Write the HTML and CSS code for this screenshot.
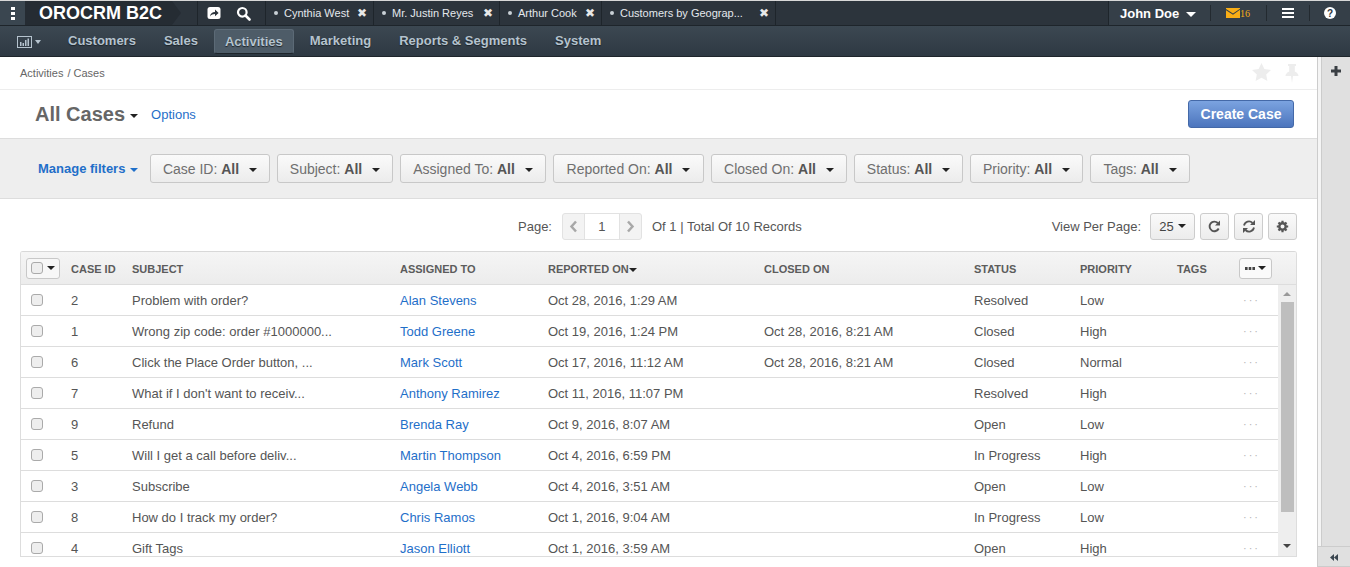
FILE: index.html
```html
<!DOCTYPE html>
<html lang="en">
<head>
  <meta charset="UTF-8" />
  <title>All Cases - Activities - OroCRM</title>
  <link rel="stylesheet" href="styles.css">
</head>
<body>
  <header class="topbar">
    <div class="dots"><i></i><i></i><i></i></div>
    <div class="logo">OROCRM B2C</div>
    <div class="quick">
      <svg width="14" height="14" viewBox="0 0 14 14"><rect x="0.5" y="1" width="13" height="12" rx="2.5" fill="#fff"/><path d="M3 10.5c.3-3 2.2-4.6 5-4.6V3.6l3.6 3.3L8 10.2V8C6 8 4.300 8.700 3 10.500z" fill="#2c343c"/></svg>
      <svg width="15" height="15" viewBox="0 0 15 15"><circle cx="6.300" cy="6.300" r="4.300" fill="none" stroke="#fff" stroke-width="2.200"/><path d="M9.500 9.500l4 4" stroke="#fff" stroke-width="2.600" stroke-linecap="round"/></svg>
    </div>
    <div class="tab tab-a"><span class="tab-title">Cynthia West</span><span class="tab-x">✖</span></div>
    <div class="tab tab-b"><span class="tab-title">Mr. Justin Reyes</span><span class="tab-x">✖</span></div>
    <div class="tab tab-c"><span class="tab-title">Arthur Cook</span><span class="tab-x">✖</span></div>
    <div class="tab tab-d"><span class="tab-title">Customers by Geograp...</span><span class="tab-x">✖</span></div>
    <div class="user-area">
      <div class="user">John Doe <b class="caret caret-white"></b></div>
      <div class="mail">
        <svg width="14" height="10" viewBox="0 0 14 10"><path d="M0 0h14v.8L7 5.500 0 1z M0 2.200l7 4.500 7-5V10H0z" fill="#f9ae16"/></svg>
        <span>16</span>
      </div>
      <div class="burger"><i></i><i></i><i></i></div>
      <div class="help">?</div>
    </div>
  </header>

  <nav class="mainnav">
    <div class="nav-chart">
      <svg width="15" height="12" viewBox="0 0 15 12"><rect x="0.500" y="0.500" width="14" height="11" fill="none" stroke="#b5c3ce"/><path d="M3 6h1.500v4H3zM5.500 7H7v3H5.500zM8 4h1.500v6H8zM10.500 2.500H12V10h-1.500z" fill="#b5c3ce"/></svg>
      <b class="caret caret-nav"></b>
    </div>
    <a href="#">Customers</a>
    <a href="#">Sales</a>
    <a href="#" class="active">Activities</a>
    <a href="#">Marketing</a>
    <a href="#">Reports &amp; Segments</a>
    <a href="#">System</a>
  </nav>

  <div class="layout">
    <main class="content">
      <div class="crumbs">
        <span>Activities<span class="crumb-sep">/</span>Cases</span>
        <div class="crumb-icons">
          <svg width="19" height="18" viewBox="0 0 19 18"><path d="M9.500 0l2.900 6 6.600.9-4.800 4.600 1.200 6.500-5.900-3.200L3.600 18l1.200-6.500L0 6.900 6.600 6z" fill="#ededed"/></svg>
          <svg class="crumb-pin" width="14" height="19" viewBox="0 0 14 19"><path d="M3 0h8v2H9.800v5.500C12 8.500 13.500 10 13.500 12H8l-1 7-1-7H.5c0-2 1.500-3.500 3.700-4.500V2H3z" fill="#ededed"/></svg>
        </div>
      </div>

      <div class="title-row">
        <h1>All Cases</h1>
        <b class="caret caret-dark"></b>
        <a href="#" class="options">Options</a>
        <button class="create">Create Case</button>
      </div>

      <div class="filters">
        <a href="#" class="manage">Manage filters <b class="caret caret-blue"></b></a>
        <button class="filter f-id">Case ID: <strong>All</strong><b class="caret caret-dark"></b></button>
        <button class="filter f-subject">Subject: <strong>All</strong><b class="caret caret-dark"></b></button>
        <button class="filter f-assigned">Assigned To: <strong>All</strong><b class="caret caret-dark"></b></button>
        <button class="filter f-reported">Reported On: <strong>All</strong><b class="caret caret-dark"></b></button>
        <button class="filter f-closed">Closed On: <strong>All</strong><b class="caret caret-dark"></b></button>
        <button class="filter f-status">Status: <strong>All</strong><b class="caret caret-dark"></b></button>
        <button class="filter f-priority">Priority: <strong>All</strong><b class="caret caret-dark"></b></button>
        <button class="filter f-tags">Tags: <strong>All</strong><b class="caret caret-dark"></b></button>
      </div>

      <div class="pager-row">
        <div class="pager">
          <span>Page:</span>
          <div class="pager-box">
            <span class="pg-arrow"><svg width="9" height="13" viewBox="0 0 9 13"><path d="M7 1.500L2.500 6.500 7 11.500" fill="none" stroke="#a8a8a8" stroke-width="2.500"/></svg></span>
            <span class="pg-num">1</span>
            <span class="pg-arrow"><svg width="9" height="13" viewBox="0 0 9 13"><path d="M2 1.500l4.500 5-4.500 5" fill="none" stroke="#a8a8a8" stroke-width="2.500"/></svg></span>
          </div>
          <span>Of 1 | Total Of 10 Records</span>
        </div>
        <div class="view-tools">
          <span class="per-label">View Per Page:</span>
          <button class="tool tool-size">25 <b class="caret caret-dark"></b></button>
          <button class="tool">
            <svg width="13" height="13" viewBox="0 0 13 13"><path d="M10.700 8.500A4.800 4.800 0 1 1 9.800 3" fill="none" stroke="#555" stroke-width="1.900"/><path d="M12 .5v5H7z" fill="#555"/></svg>
          </button>
          <button class="tool">
            <svg width="14" height="13" viewBox="0 0 14 13"><path d="M2 5.500A5 5 0 0 1 10.500 3M12 7.500A5 5 0 0 1 3.500 10" fill="none" stroke="#555" stroke-width="1.800"/><path d="M13 0v5H8zM1 13V8h5z" fill="#555"/></svg>
          </button>
          <button class="tool">
            <svg width="13" height="13" viewBox="0 0 13 13"><circle cx="6.500" cy="6.500" r="3.200" fill="none" stroke="#555" stroke-width="2.400"/><path d="M6.500 .8v2M6.500 10.200v2M.8 6.500h2M10.200 6.500h2M2.500 2.500l1.400 1.400M9.100 9.100l1.400 1.400M2.500 10.500l1.400-1.400M9.100 3.900l1.400-1.400" stroke="#555" stroke-width="2.200"/></svg>
          </button>
        </div>
      </div>

      <section class="grid">
        <div class="grid-head">
          <div class="col-check"><span class="select-all"><i class="check"></i><b class="caret caret-dark"></b></span></div>
          <div>CASE ID</div>
          <div>SUBJECT</div>
          <div>ASSIGNED TO</div>
          <div>REPORTED ON<b class="caret caret-dark caret-sort"></b></div>
          <div>CLOSED ON</div>
          <div>STATUS</div>
          <div>PRIORITY</div>
          <div>TAGS</div>
          <div><span class="col-menu"><svg width="10" height="3" viewBox="0 0 10 3"><path d="M0 0h2.600v3H0zM3.700 0h2.600v3H3.700zM7.400 0H10v3H7.400z" fill="#444"/></svg><b class="caret caret-dark"></b></span></div>
        </div>
        <div class="grid-body">
          <div class="rows">
            <div class="row"><div class="col-check"><i class="check"></i></div><div>2</div><div>Problem with order?</div><div><a href="#">Alan Stevens</a></div><div>Oct 28, 2016, 1:29 AM</div><div></div><div>Resolved</div><div>Low</div><div></div><div class="more">···</div></div>
            <div class="row"><div class="col-check"><i class="check"></i></div><div>1</div><div>Wrong zip code: order #1000000...</div><div><a href="#">Todd Greene</a></div><div>Oct 19, 2016, 1:24 PM</div><div>Oct 28, 2016, 8:21 AM</div><div>Closed</div><div>High</div><div></div><div class="more">···</div></div>
            <div class="row"><div class="col-check"><i class="check"></i></div><div>6</div><div>Click the Place Order button, ...</div><div><a href="#">Mark Scott</a></div><div>Oct 17, 2016, 11:12 AM</div><div>Oct 28, 2016, 8:21 AM</div><div>Closed</div><div>Normal</div><div></div><div class="more">···</div></div>
            <div class="row"><div class="col-check"><i class="check"></i></div><div>7</div><div>What if I don't want to receiv...</div><div><a href="#">Anthony Ramirez</a></div><div>Oct 11, 2016, 11:07 PM</div><div></div><div>Resolved</div><div>High</div><div></div><div class="more">···</div></div>
            <div class="row"><div class="col-check"><i class="check"></i></div><div>9</div><div>Refund</div><div><a href="#">Brenda Ray</a></div><div>Oct 9, 2016, 8:07 AM</div><div></div><div>Open</div><div>Low</div><div></div><div class="more">···</div></div>
            <div class="row"><div class="col-check"><i class="check"></i></div><div>5</div><div>Will I get a call before deliv...</div><div><a href="#">Martin Thompson</a></div><div>Oct 4, 2016, 6:59 PM</div><div></div><div>In Progress</div><div>High</div><div></div><div class="more">···</div></div>
            <div class="row"><div class="col-check"><i class="check"></i></div><div>3</div><div>Subscribe</div><div><a href="#">Angela Webb</a></div><div>Oct 4, 2016, 3:51 AM</div><div></div><div>Open</div><div>Low</div><div></div><div class="more">···</div></div>
            <div class="row"><div class="col-check"><i class="check"></i></div><div>8</div><div>How do I track my order?</div><div><a href="#">Chris Ramos</a></div><div>Oct 1, 2016, 9:04 AM</div><div></div><div>In Progress</div><div>Low</div><div></div><div class="more">···</div></div>
            <div class="row"><div class="col-check"><i class="check"></i></div><div>4</div><div>Gift Tags</div><div><a href="#">Jason Elliott</a></div><div>Oct 1, 2016, 3:59 AM</div><div></div><div>Open</div><div>High</div><div></div><div class="more">···</div></div>
          </div>
          <div class="scrollbar">
            <b class="sb-up"></b>
            <div class="sb-thumb"></div>
            <b class="sb-down"></b>
          </div>
        </div>
      </section>
    </main>

    <aside class="side">
      <div class="side-main">
        <svg width="10" height="10" viewBox="0 0 10 10"><path d="M3.500 0h3v3.500H10v3H6.500V10h-3V6.500H0v-3h3.500z" fill="#3a3f44"/></svg>
      </div>
      <div class="side-foot">
        <svg width="8" height="7" viewBox="0 0 8 7"><path d="M4 0v7L0 3.500zM8 0v7L4 3.500z" fill="#3a4650"/></svg>
      </div>
    </aside>
  </div>
</body>
</html>
```

FILE: styles.css
```css
* {
  box-sizing: border-box;
}
html, body {
  height: 100%;
}
body {
  margin: 0;
  height: 567px;
  overflow: hidden;
  display: flex;
  flex-direction: column;
  font-family: "Liberation Sans", Arial, sans-serif;
  font-size: 13px;
  color: #444;
  background: #fff;
}
a {
  text-decoration: none;
}
button {
  font-family: inherit;
  cursor: pointer;
}

/* carets */
.caret {
  display: inline-block;
  width: 0;
  height: 0;
  border-left: 4px solid transparent;
  border-right: 4px solid transparent;
  border-top: 4px solid #222;
  vertical-align: middle;
}
.caret-white {
  border-left-width: 5px;
  border-right-width: 5px;
  border-top: 5px solid #fff;
  margin-left: 3px;
}
.caret-nav {
  border-left-width: 3.5px;
  border-right-width: 3.5px;
  border-top-color: #b5c3ce;
}
.caret-blue {
  border-top-color: #1f6fc9;
}

/* top bar */
.topbar {
  flex: none;
  height: 26px;
  display: flex;
  background: #2c343c;
  border-top: 1px solid #d8d8d8;
  border-bottom: 1px solid #1e252b;
  color: #e4e8ec;
}
.dots {
  width: 25px;
  background: #3a4650;
  display: flex;
  flex-direction: column;
  align-items: center;
  justify-content: center;
  gap: 2px;
}
.dots i {
  width: 4px;
  height: 3px;
  background: #fff;
}
.logo {
  width: 172px;
  padding-left: 14px;
  line-height: 24px;
  font-size: 18px;
  font-weight: bold;
  color: #fff;
  background: #252c33;
  clip-path: polygon(0 0, 147px 0, 156px 50%, 147px 100%, 0 100%);
}
.quick {
  width: 69px;
  display: flex;
  align-items: center;
  justify-content: center;
  gap: 15px;
  border-left: 1px solid #1e252b;
  border-right: 1px solid #1e252b;
  padding-right: 5px;
}
.tab {
  display: flex;
  align-items: center;
  border-right: 1px solid #1e252b;
  padding-left: 8px;
  font-size: 11px;
}
.tab-title::before {
  content: "";
  display: inline-block;
  width: 4px;
  height: 4px;
  border-radius: 50%;
  background: #c9d0d6;
  margin-right: 6px;
  vertical-align: 2px;
}
.tab-x {
  margin-left: auto;
  padding-right: 6px;
  font-size: 12px;
  color: #e8e8e8;
}
.tab-a { width: 108px; }
.tab-b { width: 126px; }
.tab-c { width: 102px; }
.tab-d { width: 174px; }

.user-area {
  margin-left: auto;
  width: 242px;
  height: 24px;
  display: flex;
  align-items: center;
  background: #353f48;
  border-left: 1px solid #1e252b;
}
.user {
  width: 101px;
  padding-left: 11px;
  font-size: 13px;
  font-weight: bold;
  color: #fff;
}
.mail, .burger, .help {
  height: 16px;
  display: flex;
  align-items: center;
  border-left: 1px solid #232a30;
}
.mail {
  width: 56px;
  padding-left: 15px;
}
.mail span {
  font-family: "Liberation Serif", serif;
  font-size: 10px;
  color: #f9ae16;
}
.burger {
  width: 43px;
  flex-direction: column;
  justify-content: center;
  gap: 2px;
}
.burger i {
  width: 12px;
  height: 2px;
  background: #fff;
}
.help {
  width: 41px;
  justify-content: center;
  position: relative;
  z-index: 0;
  font-size: 10px;
  font-weight: bold;
  color: #2c343c;
}
.help::before {
  content: "";
  position: absolute;
  left: 14px;
  top: 2px;
  width: 12px;
  height: 12px;
  border-radius: 50%;
  background: #fff;
  z-index: -1;
}

/* main nav */
.mainnav {
  flex: none;
  height: 31px;
  display: flex;
  align-items: center;
  padding-top: 1px;
  background: linear-gradient(#3c4852, #2e3943);
  border-bottom: 1px solid #1e252b;
}
.nav-chart {
  width: 54px;
  padding-left: 17px;
  display: flex;
  align-items: center;
  gap: 3px;
}
.mainnav a {
  padding: 0 14px;
  height: 25px;
  line-height: 24px;
  font-size: 13px;
  font-weight: bold;
  color: #b5c3ce;
  text-shadow: 0 1px 1px #1c2329;
  border-radius: 3px;
}
.mainnav a.active {
  margin: 0 2px;
  padding: 0 10px;
  background: #4e5c68;
  border: 1px solid #5c6a76;
  border-bottom-color: #1e252b;
  line-height: 23px;
}

/* page */
.layout {
  flex: 1;
  min-height: 0;
  display: flex;
}
.content {
  flex: 1;
  min-width: 0;
  overflow: hidden;
}
.crumbs {
  height: 33px;
  padding: 0 18px 0 20px;
  display: flex;
  align-items: center;
  justify-content: space-between;
  border-bottom: 1px solid #ededed;
  font-size: 11px;
  color: #666;
}
.crumb-sep {
  margin: 0 3px 0 4px;
}
.crumb-icons {
  display: flex;
  align-items: center;
  gap: 14px;
  margin-top: -2px;
}
.crumb-pin {
  margin-top: 3px;
}
.title-row {
  height: 48px;
  padding: 0 23px 0 35px;
  display: flex;
  align-items: center;
}
.title-row h1 {
  margin: 0;
  font-size: 20px;
  color: #666;
}
.title-row .caret {
  margin: 3px 0 0 5px;
}
.options {
  margin-left: 13px;
  font-size: 13px;
  color: #1f6fc9;
}
.create {
  margin-left: auto;
  height: 28px;
  width: 106px;
  padding: 0;
  font-size: 14px;
  font-weight: bold;
  color: #fff;
  background: linear-gradient(#7ba3e0, #4c75bd);
  border: 1px solid #4469a8;
  border-radius: 3px;
}
.filters {
  height: 61px;
  padding-left: 38px;
  display: flex;
  align-items: center;
  gap: 7px;
  background: #eee;
  border-top: 1px solid #ddd;
  border-bottom: 1px solid #ddd;
}
.manage {
  width: 105px;
  white-space: nowrap;
  font-size: 13px;
  font-weight: bold;
  color: #1f6fc9;
}
.manage .caret {
  margin-left: 1px;
}
.filter {
  height: 29px;
  padding: 0;
  font-size: 14px;
  color: #6f6f6f;
  background: linear-gradient(#fafafa, #ececec);
  border: 1px solid #c8c8c8;
  border-radius: 3px;
  white-space: nowrap;
}
.filter strong {
  color: #555;
}
.filter .caret {
  margin-left: 10px;
  vertical-align: 2px;
}
.f-id { width: 120px; }
.f-subject { width: 116px; }
.f-assigned { width: 146px; }
.f-reported { width: 151px; }
.f-closed { width: 136px; }
.f-status { width: 109px; }
.f-priority { width: 113px; }
.f-tags { width: 100px; }

.pager-row {
  height: 52px;
  padding: 2px 20px 0 518px;
  display: flex;
  align-items: center;
  justify-content: space-between;
  color: #555;
}
.pager {
  display: flex;
  align-items: center;
  gap: 10px;
}
.pager-box {
  height: 27px;
  display: flex;
  border: 1px solid #e2e2e2;
  border-radius: 3px;
  background: #f3f3f3;
}
.pg-arrow {
  width: 21px;
  display: flex;
  align-items: center;
  justify-content: center;
}
.pg-num {
  width: 36px;
  line-height: 25px;
  text-align: center;
  background: #fff;
  border-left: 1px solid #e2e2e2;
  border-right: 1px solid #e2e2e2;
}
.view-tools {
  display: flex;
  align-items: center;
  gap: 5px;
}
.per-label {
  margin-right: 4px;
}
.tool {
  width: 29px;
  height: 27px;
  padding: 0;
  display: flex;
  align-items: center;
  justify-content: center;
  font-size: 13px;
  color: #444;
  background: linear-gradient(#fafafa, #ececec);
  border: 1px solid #ccc;
  border-radius: 3px;
}
.tool-size {
  width: 45px;
  gap: 4px;
}

/* cases grid */
.grid {
  margin: 0 20px;
  width: 1277px;
  height: 306px;
  overflow: hidden;
  border: 1px solid #ddd;
  border-top-color: #d8d8d8;
  border-radius: 3px 3px 0 0;
}
.grid-head, .row {
  display: grid;
  grid-template-columns: 42px 61px 268px 148px 216px 210px 106px 97px 62px 47px;
  align-items: center;
}
.grid-head {
  height: 33px;
  padding-top: 2px;
  background: linear-gradient(#f5f5f5, #ececec);
  border-bottom: 1px solid #ddd;
  font-size: 11px;
  font-weight: bold;
  color: #5c5c5c;
}
.grid-head > div, .row > div {
  padding-left: 8px;
  white-space: nowrap;
}
.grid-head > .col-check, .row > .col-check {
  padding-left: 5px;
}
.grid-head > .col-check, .grid-head > div:last-child {
  margin-top: -2px;
}
.select-all {
  width: 34px;
  height: 21px;
  display: flex;
  align-items: center;
  gap: 4px;
  padding-left: 4px;
  border: 1px solid #c8c8c8;
  border-radius: 3px;
  background: #f7f7f7;
}
.check {
  display: block;
  width: 12px;
  height: 12px;
  background: #eee;
  border: 1px solid #aaa;
  border-radius: 3px;
}
.row .check {
  margin-left: 5px;
}
.caret-sort {
  vertical-align: 1px;
}
.col-menu {
  width: 33px;
  height: 21px;
  display: flex;
  align-items: center;
  justify-content: center;
  gap: 3px;
  border: 1px solid #c8c8c8;
  border-radius: 3px;
  background: #fafafa;
}
.grid-body {
  display: flex;
  height: 272px;
  overflow: hidden;
}
.rows {
  width: 1258px;
}
.row {
  height: 31px;
  border-bottom: 1px solid #ddd;
  color: #555;
}
.row a {
  color: #1f6fc9;
}
.row > .more {
  padding-left: 12px;
  font-size: 11px;
  color: #b5b5b5;
  letter-spacing: 2px;
}
.scrollbar {
  width: 18px;
  display: flex;
  flex-direction: column;
  align-items: center;
  background: #eee;
}
.sb-up, .sb-down {
  flex: none;
  width: 0;
  height: 0;
  border-left: 4px solid transparent;
  border-right: 4px solid transparent;
}
.sb-up {
  margin: 7px 0 6px;
  border-bottom: 4px solid #999;
}
.sb-down {
  margin-top: 32px;
  border-top: 4px solid #444;
}
.sb-thumb {
  flex: none;
  width: 13px;
  height: 210px;
  background: #bebebe;
}

/* right rail */
.side {
  flex: none;
  width: 33px;
  display: flex;
  flex-direction: column;
  background: #e0e0e0;
  border-left: 1px solid #ccc;
}
.side-main {
  flex: 1;
  margin-left: 3px;
  padding-top: 7px;
  text-align: center;
  border-left: 1px solid #ccc;
  box-shadow: -3px 0 0 #f5f5f5;
}
.side-foot {
  flex: none;
  height: 21px;
  display: flex;
  align-items: center;
  justify-content: center;
  border-top: 1px solid #ccc;
  border-bottom: 1px solid #ccc;
  padding-top: 1px;
}
```
